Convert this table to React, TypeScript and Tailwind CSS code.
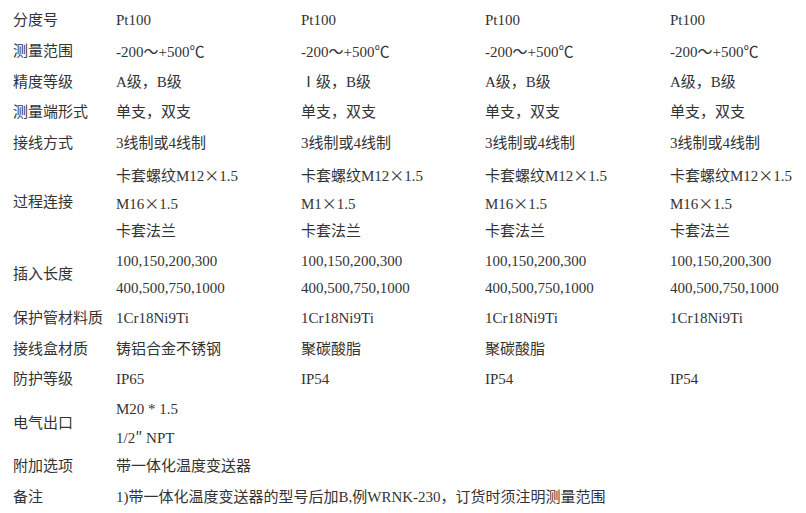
import React from "react";

type Row = { label: string; cells: string[][]; span?: boolean; pad?: string; lh?: string };

const rows: Row[] = [
  { label: "分度号", cells: [["Pt100"], ["Pt100"], ["Pt100"], ["Pt100"]] },
  { label: "测量范围", cells: [["-200～+500℃"], ["-200～+500℃"], ["-200～+500℃"], ["-200～+500℃"]] },
  { label: "精度等级", cells: [["A级，B级"], ["Ⅰ级，B级"], ["A级，B级"], ["A级，B级"]] },
  { label: "测量端形式", cells: [["单支，双支"], ["单支，双支"], ["单支，双支"], ["单支，双支"]] },
  { label: "接线方式", cells: [["3线制或4线制"], ["3线制或4线制"], ["3线制或4线制"], ["3线制或4线制"]] },
  {
    label: "过程连接",
    pad: "py-[2px]",
    lh: "h-[28px] leading-[28px]",
    cells: [
      ["卡套螺纹M12×1.5", "M16×1.5", "卡套法兰"],
      ["卡套螺纹M12×1.5", "M1×1.5", "卡套法兰"],
      ["卡套螺纹M12×1.5", "M16×1.5", "卡套法兰"],
      ["卡套螺纹M12×1.5", "M16×1.5", "卡套法兰"],
    ],
  },
  {
    label: "插入长度",
    pad: "py-[1px]",
    lh: "h-[27px] leading-[27px]",
    cells: [
      ["100,150,200,300", "400,500,750,1000"],
      ["100,150,200,300", "400,500,750,1000"],
      ["100,150,200,300", "400,500,750,1000"],
      ["100,150,200,300", "400,500,750,1000"],
    ],
  },
  { label: "保护管材料质", cells: [["1Cr18Ni9Ti"], ["1Cr18Ni9Ti"], ["1Cr18Ni9Ti"], ["1Cr18Ni9Ti"]] },
  { label: "接线盒材质", cells: [["铸铝合金不锈钢"], ["聚碳酸脂"], ["聚碳酸脂"], [""]] },
  { label: "防护等级", cells: [["IP65"], ["IP54"], ["IP54"], ["IP54"]] },
  { label: "电气出口", pad: "py-0", lh: "h-[28px] leading-[28px]", cells: [["M20 * 1.5", "1/2″ NPT"], [], [], []] },
  { label: "附加选项", cells: [["带一体化温度变送器"], [], [], []] },
  {
    label: "备注",
    span: true,
    cells: [["1)带一体化温度变送器的型号后加B,例WRNK-230，订货时须注明测量范围"]],
  },
];

// glyphs that should come from the CJK face, not the serif
function Txt({ s }: { s: string }) {
  const parts = s.split(/([×℃″])/);
  return (
    <>
      {parts.map((p, i) =>
        /^[×℃″]$/.test(p) ? (
          <span key={i} style={{ fontFamily: '"Noto Sans CJK SC", sans-serif' }}>
            {p}
          </span>
        ) : (
          <React.Fragment key={i}>{p}</React.Fragment>
        )
      )}
    </>
  );
}

const single = "h-[30.75px] leading-[30.75px] overflow-visible";

export default function App() {
  return (
    <div
      className="w-[806px] h-[513px] bg-white text-[#333] text-[15px] pt-[5px]"
      style={{ fontFamily: '"Liberation Serif", "Noto Sans CJK SC", sans-serif' }}
    >
      <table className="table-fixed border-collapse w-[806px]">
        <colgroup>
          <col className="w-[116px]" />
          <col className="w-[185px]" />
          <col className="w-[184px]" />
          <col className="w-[185px]" />
          <col />
        </colgroup>
        <tbody>
          {rows.map((r) => {
            const multi = r.cells[0] && r.cells[0].length > 1;
            return (
              <tr key={r.label}>
                <td className="p-0 pl-[13px] align-middle whitespace-nowrap leading-[30.75px]">{r.label}</td>
                {r.span ? (
                  <td colSpan={4} className="p-0 align-middle whitespace-nowrap">
                    <div className={single}>
                      <Txt s={r.cells[0][0]} />
                    </div>
                  </td>
                ) : (
                  r.cells.map((c, i) => (
                    <td key={i} className="p-0 align-middle whitespace-nowrap">
                      {multi ? (
                        <div className={r.pad}>
                          {c.map((line, j) => (
                            <div key={j} className={r.lh}>
                              <Txt s={line} />
                            </div>
                          ))}
                        </div>
                      ) : (
                        <div className={single}>
                          <Txt s={c[0] ?? ""} />
                        </div>
                      )}
                    </td>
                  ))
                )}
              </tr>
            );
          })}
        </tbody>
      </table>
    </div>
  );
}
